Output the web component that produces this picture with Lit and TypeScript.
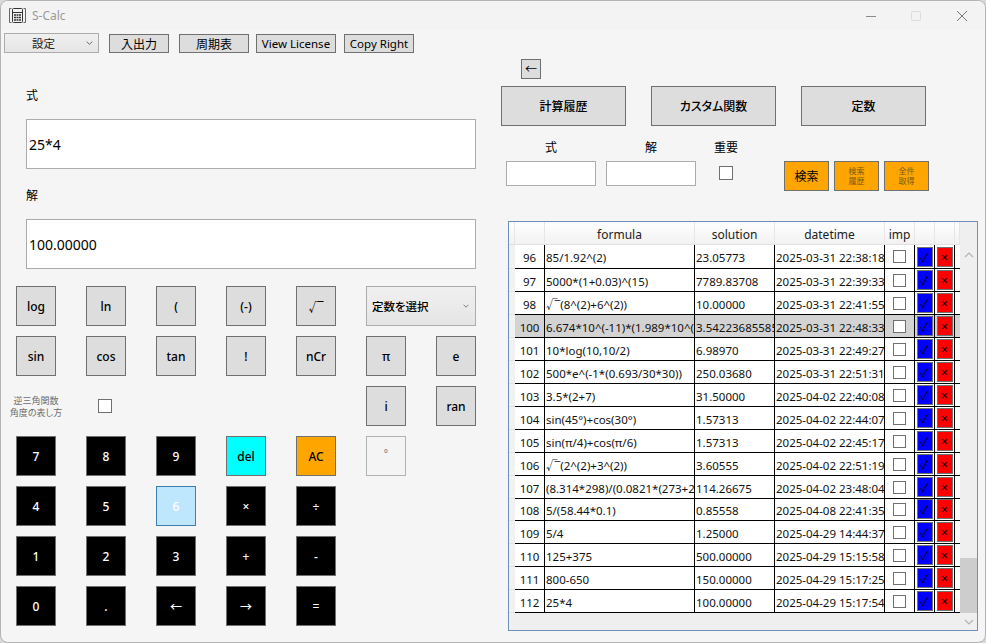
import { LitElement, html, css, nothing } from "lit";
import { customElement } from "lit/decorators.js";

type Key = { t: string; k?: string } | null;

const RADICAL = "√‾";

const KEY_ROWS: Key[][] = [
  [{ t: "log" }, { t: "ln" }, { t: "(" }, { t: "(-)" }, { t: RADICAL }],
  [{ t: "sin" }, { t: "cos" }, { t: "tan" }, { t: "!" }, { t: "nCr" }, { t: "π" }, { t: "e" }],
  [null, null, null, null, null, { t: "i" }, { t: "ran" }],
  [{ t: "7", k: "num" }, { t: "8", k: "num" }, { t: "9", k: "num" }, { t: "del", k: "cyan" }, { t: "AC", k: "orange" }, { t: "°", k: "off" }, null],
  [{ t: "4", k: "num" }, { t: "5", k: "num" }, { t: "6", k: "hover" }, { t: "×", k: "num" }, { t: "÷", k: "num" }, null, null],
  [{ t: "1", k: "num" }, { t: "2", k: "num" }, { t: "3", k: "num" }, { t: "+", k: "num" }, { t: "-", k: "num" }, null, null],
  [{ t: "0", k: "num" }, { t: ".", k: "num" }, { t: "←", k: "num" }, { t: "→", k: "num" }, { t: "=", k: "num" }, null, null],
];

const HISTORY = [
  ["96", "85/1.92^(2)", "23.05773", "2025-03-31 22:38:18"],
  ["97", "5000*(1+0.03)^(15)", "7789.83708", "2025-03-31 22:39:33"],
  ["98", "√‾(8^(2)+6^(2))", "10.00000", "2025-03-31 22:41:55"],
  ["100", "6.674*10^(-11)*(1.989*10^(30)*5.972*10^(24))", "3.54223685585", "2025-03-31 22:48:33"],
  ["101", "10*log(10,10/2)", "6.98970", "2025-03-31 22:49:27"],
  ["102", "500*e^(-1*(0.693/30*30))", "250.03680", "2025-03-31 22:51:31"],
  ["103", "3.5*(2+7)", "31.50000", "2025-04-02 22:40:08"],
  ["104", "sin(45°)+cos(30°)", "1.57313", "2025-04-02 22:44:07"],
  ["105", "sin(π/4)+cos(π/6)", "1.57313", "2025-04-02 22:45:17"],
  ["106", "√‾(2^(2)+3^(2))", "3.60555", "2025-04-02 22:51:19"],
  ["107", "(8.314*298)/(0.0821*(273+25))", "114.26675", "2025-04-02 23:48:04"],
  ["108", "5/(58.44*0.1)", "0.85558", "2025-04-08 22:41:35"],
  ["109", "5/4", "1.25000", "2025-04-29 14:44:37"],
  ["110", "125+375", "500.00000", "2025-04-29 15:15:58"],
  ["111", "800-650", "150.00000", "2025-04-29 15:17:25"],
  ["112", "25*4", "100.00000", "2025-04-29 15:17:54"],
];

const chevron = (up = false) => html`<svg class="chev" width="10" height="6" viewBox="0 0 10 6">
  <path d=${up ? "M1 5L5 1L9 5" : "M1 1L5 5L9 1"} fill="none" stroke="currentColor" stroke-width="1.2" />
</svg>`;

// the radical sign and its bar sit tighter than the font sets them
const withRadical = (text: string) =>
  text.startsWith(RADICAL)
    ? html`<span class="rad">${RADICAL}</span><span>${text.slice(RADICAL.length)}</span>`
    : text;

@customElement("app-root")
export class AppRoot extends LitElement {
  static styles = css`
    :host {
      display: block;
      width: 986px;
      height: 643px;
      background: #d8d8d8;
      font-family: "Noto Sans", "Noto Sans CJK JP", sans-serif;
      font-size: 12px;
      color: #000;
    }
    * {
      box-sizing: border-box;
    }
    .window {
      width: 986px;
      height: 643px;
      border: 1px solid #b4b4b4;
      border-radius: 8px;
      background: #f5f5f5;
      overflow: hidden;
    }
    .titlebar {
      height: 29px;
      background: #f3f3f3;
      display: flex;
      align-items: center;
      padding-left: 8px;
      color: #9a9a9a;
    }
    .titlebar .name {
      margin-left: 6px;
      font-size: 12px;
    }
    .winctl {
      margin-left: auto;
      display: flex;
      align-items: center;
      gap: 35px;
      padding-right: 18px;
    }
    .winctl .close {
      margin-left: 1px;
    }
    button {
      font: inherit;
      color: inherit;
      padding: 0;
      border: 1px solid #707070;
      background: #dddddd;
      display: flex;
      align-items: center;
      justify-content: center;
      overflow: hidden;
      white-space: nowrap;
    }
    .rad {
      display: inline-block;
      letter-spacing: -3px;
      margin-right: 3px;
    }
    .toolbar {
      display: flex;
      align-items: flex-end;
      height: 23px;
      padding-left: 3px;
    }
    .toolbar button {
      height: 19px;
      margin-left: 10px;
    }
    .toolbar .w60 {
      width: 60px;
    }
    .toolbar .w70 {
      width: 70px;
    }
    .toolbar .license {
      width: 80px;
      margin-left: 7px;
      font-size: 11.5px;
    }
    .toolbar .copy {
      width: 70px;
      margin-left: 8px;
      font-size: 11.5px;
    }
    .combo {
      display: flex;
      align-items: center;
      border: 1px solid #acacac;
      background: linear-gradient(#f0f0f0, #e5e5e5);
      color: #222;
    }
    .combo .chev {
      color: #555;
      flex: none;
    }
    .combo.settings {
      width: 95px;
      height: 20px;
      padding-left: 27px;
      gap: 31px;
      font-size: 11.5px;
    }
    .combo.settings .chev {
      width: 7px;
    }
    .main {
      display: grid;
      grid-template-columns: 489px 1fr;
    }
    .left {
      padding: 32px 0 0 25px;
    }
    .field-label {
      height: 20px;
      line-height: 22px;
    }
    .big-input {
      display: block;
      width: 450px;
      height: 50px;
      margin: 14px 0 16px;
      border: 1px solid #acacac;
      background: #fff;
      padding: 0 2px;
      font: inherit;
      font-size: 14px;
      color: #000;
      outline: none;
    }
    .keypad {
      display: grid;
      grid-template-columns: repeat(7, 40px);
      grid-auto-rows: 40px;
      gap: 10px 30px;
      margin: 17px 0 0 -10px;
    }
    .keypad button {
      font-weight: 500;
      padding-top: 1px;
    }
    .keypad .num {
      background: #000;
      color: #fff;
    }
    .keypad .cyan {
      background: #00ffff;
    }
    .keypad .orange {
      background: #ffa500;
    }
    .keypad .off {
      background: #f4f4f4;
      border-color: #adb2b5;
      color: #888;
      align-items: flex-start;
      padding-top: 9px;
      font-size: 10px;
    }
    .keypad .hover {
      background: #bee6fd;
      border-color: #3c7fb1;
      color: #fff;
    }
    .combo.constants {
      grid-column: span 2;
      padding: 0 6px 0 5px;
      justify-content: space-between;
      font-weight: 500;
      color: #000;
      font-size: 11.5px;
      font-feature-settings: "palt";
    }
    .combo.constants .chev {
      width: 6px;
    }
    .trig-label {
      justify-self: center;
      align-self: center;
      padding-top: 1px;
      white-space: nowrap;
      text-align: center;
      font-size: 9px;
      line-height: 12px;
      color: #6d6d6d;
      font-feature-settings: "palt";
    }
    .check {
      display: block;
      width: 14px;
      height: 14px;
      border: 1px solid #707070;
      background: #fff;
    }
    .trig-check {
      justify-self: center;
      align-self: center;
      margin-right: 2px;
    }
    .right {
      padding-top: 6px;
    }
    .back {
      width: 20px;
      height: 20px;
      margin-left: 31px;
    }
    .tabs {
      display: flex;
      gap: 25px;
      margin: 7px 0 0 11px;
    }
    .tabs button {
      width: 125px;
      height: 40px;
      font-weight: 500;
      font-feature-settings: "palt";
    }
    .search {
      display: flex;
      gap: 10px;
      margin: 12px 0 0 16px;
    }
    .search-field {
      width: 90px;
      text-align: center;
    }
    .search-field label {
      display: block;
      height: 20px;
      line-height: 20px;
      margin-bottom: 3px;
    }
    .search-field input {
      display: block;
      width: 90px;
      height: 25px;
      border: 1px solid #acacac;
      background: #fff;
      outline: none;
    }
    .search-field.imp {
      width: 40px;
    }
    .search-field.imp .check {
      margin: 8px auto 0;
    }
    .actions {
      display: flex;
      gap: 5px;
      margin: 23px 0 0 28px;
    }
    .actions button {
      width: 45px;
      height: 30px;
      background: #ffa500;
      white-space: normal;
      text-align: center;
    }
    .actions .dim {
      font-size: 8px;
      line-height: 10px;
      color: #7a5a10;
    }
    .frame {
      display: flex;
      width: 470px;
      height: 410px;
      margin: 30px 0 0 18px;
      border: 1px solid #6d8fb8;
      background: #efefef;
    }
    .grid {
      width: 451px;
    }
    .head,
    .row {
      display: grid;
      grid-template-columns: 6px 30px 150px 80px 110px 30px 20px 20px 5px;
    }
    .head {
      height: 23px;
      background: linear-gradient(#ffffff, #f1f1f1);
      border-bottom: 1px solid #e2e2e2;
    }
    .head div {
      display: flex;
      align-items: center;
      justify-content: center;
      padding-top: 2px;
      border-right: 1px solid #e6e6e6;
      color: #222;
    }
    .row {
      height: 23px;
      background: #fff;
    }
    .row:first-child {
      height: 24px;
    }
    .row.short {
      height: 22px;
    }
    .row.selected {
      background: #d3d3d3;
    }
    .row > div {
      border-right: 1px solid #000;
      border-bottom: 1px solid #000;
      display: flex;
      align-items: center;
      overflow: hidden;
      white-space: nowrap;
      padding: 2px 0 0 1px;
      font-size: 11.5px;
      color: #111;
    }
    .row > .strip {
      background: #f1f1f1;
      border: 0;
      border-bottom: 1px solid #e2e2e2;
    }
    .row > .num {
      justify-content: center;
      padding: 2px 0 0;
    }
    .row > .mid {
      justify-content: center;
      padding: 0;
    }
    .row > .mid .check {
      width: 13px;
      height: 13px;
    }
    .row > .act {
      align-items: flex-end;
      justify-content: center;
      padding: 0 0 1px;
    }
    .row > .tail {
      border-right: 0;
    }
    .act button {
      width: 16px;
      height: 20px;
      font-size: 12px;
      color: #000;
    }
    .act .ok {
      background: #0000ff;
    }
    .act .no {
      background: #ff0000;
    }
    .scroll {
      width: 17px;
      display: flex;
      flex-direction: column;
      align-items: center;
      color: #b4b4b4;
      padding-top: 30px;
    }
    .thumb {
      width: 17px;
      height: 55px;
      background: #cdcdcd;
      margin-top: auto;
    }
    .scroll .down {
      height: 17px;
      display: flex;
      align-items: center;
    }
  `;

  private renderKey(key: Key) {
    if (!key) return html`<div></div>`;
    return html`<button class=${key.k ?? nothing}>${withRadical(key.t)}</button>`;
  }

  private renderKeypad() {
    return KEY_ROWS.map((row, i) => {
      if (i === 0) {
        return html`${row.map((k) => this.renderKey(k))}
          <div class="combo constants"><span>定数を選択</span>${chevron()}</div>`;
      }
      if (i === 2) {
        return html`<div class="trig-label">逆三角関数<br />角度の表し方</div>
          <span class="check trig-check"></span>
          ${row.slice(2).map((k) => this.renderKey(k))}`;
      }
      return row.map((k) => this.renderKey(k));
    });
  }

  render() {
    return html`
      <div class="window">
        <div class="titlebar">
          <svg width="17" height="17" viewBox="0 0 17 17" fill="none" stroke="#333">
            <path d="M2.5 1.5H.5V15.5H2.5M14.5 1.5H16.5V15.5H14.5" stroke="#666" />
            <rect x="3.5" y="1.5" width="10" height="14" rx="1" />
            <path d="M4 5.5H13" />
            <path d="M5 8h2M7.5 8h2M10 8h2M5 10.5h2M7.5 10.5h2M10 10.5h2M5 13h2M7.5 13h2M10 13h2" stroke-width="1.4" />
          </svg>
          <span class="name">S-Calc</span>
          <div class="winctl">
            <svg width="10" height="10" viewBox="0 0 10 10"><path d="M0 5.5H10" stroke="#8a8a8a" /></svg>
            <svg width="10" height="10" viewBox="0 0 10 10" fill="none"><rect x=".5" y=".5" width="9" height="9" rx="1" stroke="#dcdcdc" /></svg>
            <svg class="close" width="10" height="10" viewBox="0 0 10 10"><path d="M0 0L10 10M10 0L0 10" stroke="#777" /></svg>
          </div>
        </div>

        <div class="toolbar">
          <div class="combo settings"><span>設定</span>${chevron()}</div>
          <button class="w60">入出力</button>
          <button class="w70">周期表</button>
          <button class="license">View License</button>
          <button class="copy">Copy Right</button>
        </div>

        <div class="main">
          <section class="left">
            <div class="field-label">式</div>
            <input class="big-input" value="25*4" />
            <div class="field-label">解</div>
            <input class="big-input" value="100.00000" />
            <div class="keypad">${this.renderKeypad()}</div>
          </section>

          <section class="right">
            <button class="back">←</button>
            <div class="tabs">
              <button>計算履歴</button>
              <button>カスタム関数</button>
              <button>定数</button>
            </div>
            <div class="search">
              <div class="search-field"><label>式</label><input /></div>
              <div class="search-field"><label>解</label><input /></div>
              <div class="search-field imp"><label>重要</label><span class="check"></span></div>
              <div class="actions">
                <button>検索</button>
                <button class="dim">検索<br />履歴</button>
                <button class="dim">全件<br />取得</button>
              </div>
            </div>
            <div class="frame">
              <div class="grid">
                <div class="head">
                  <div></div><div></div><div>formula</div><div>solution</div><div>datetime</div><div>imp</div><div></div><div></div><div></div>
                </div>
                <div class="rows">
                  ${HISTORY.map(
                    (r) => html`<div class="row ${r[0] === "100" ? "selected" : ""} ${r[0] === "108" ? "short" : ""}">
                      <div class="strip"></div>
                      <div class="num">${r[0]}</div>
                      <div>${withRadical(r[1])}</div>
                      <div>${r[2]}</div>
                      <div>${r[3]}</div>
                      <div class="mid"><span class="check"></span></div>
                      <div class="act"><button class="ok">✓</button></div>
                      <div class="act"><button class="no">×</button></div>
                      <div class="tail"></div>
                    </div>`
                  )}
                </div>
              </div>
              <div class="scroll">
                ${chevron(true)}
                <div class="thumb"></div>
                <div class="down">${chevron()}</div>
              </div>
            </div>
          </section>
        </div>
      </div>
    `;
  }
}
